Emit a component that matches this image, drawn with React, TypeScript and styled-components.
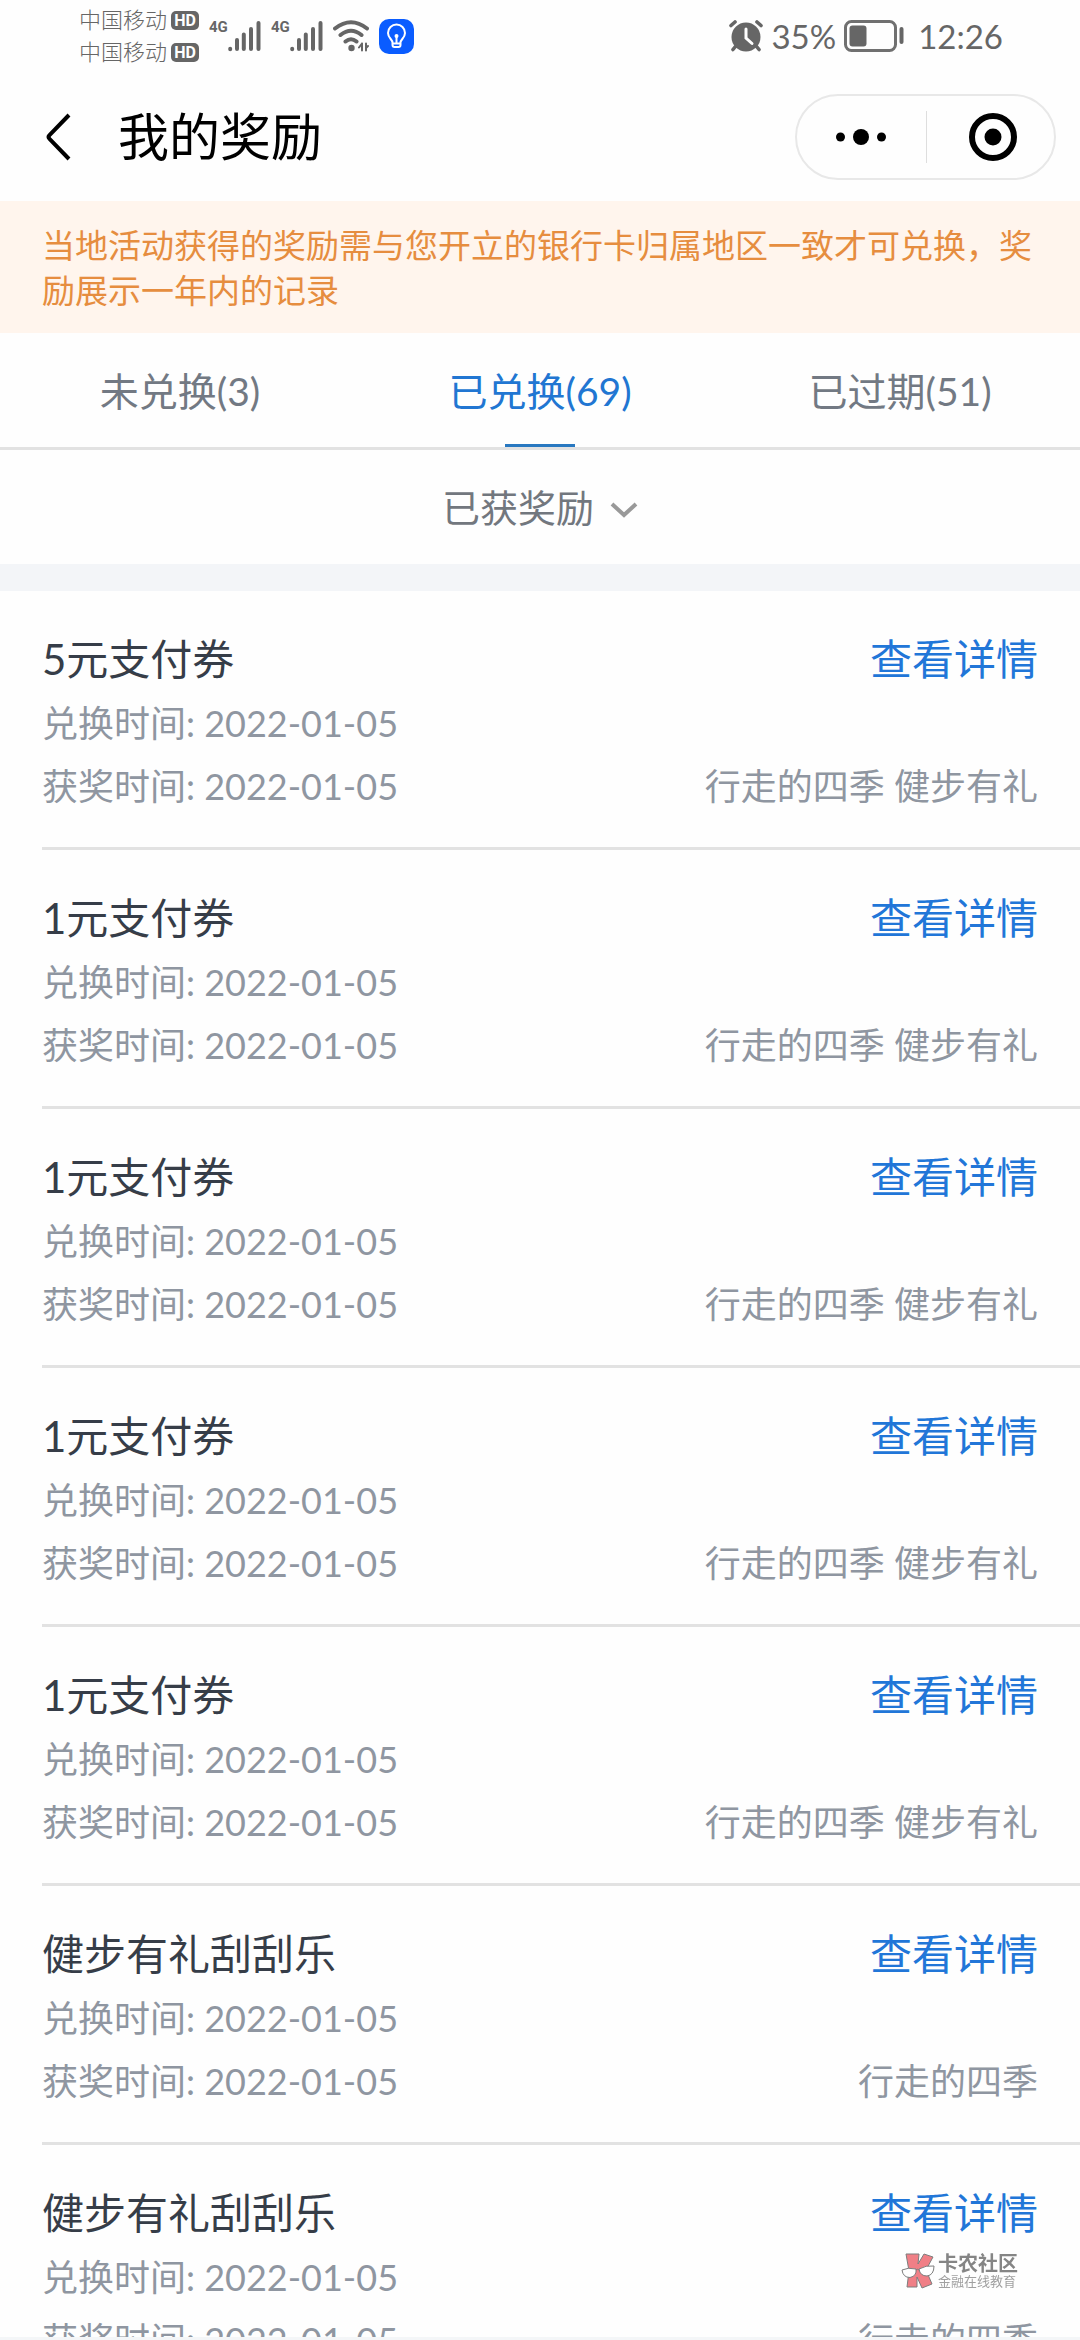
import React, { useState } from "react";
import styled, { createGlobalStyle } from "styled-components";

const GlobalStyle = createGlobalStyle`
  *, *::before, *::after { box-sizing: border-box; }
  body {
    margin: 0;
    background: #fefefe;
    font-family: Lato, "Noto Sans CJK SC", sans-serif;
  }
  button, select { font: inherit; color: inherit; background: none; border: 0; padding: 0; margin: 0; }
`;

const Screen = styled.div`
  height: 100vh;
  display: flex;
  flex-direction: column;
  border-bottom: 3px solid #f4f6f8;
`;

/* ---------- status bar ---------- */

const StatusBar = styled.div`
  flex: none;
  height: 74px;
  padding: 3px 77px 0 79px;
  display: flex;
  justify-content: space-between;
  color: #666;
`;

const StatusGroup = styled.div<{ $gap: number }>`
  height: 66px;
  display: flex;
  align-items: center;
  gap: ${(p) => p.$gap}px;
`;

const Carriers = styled.div`
  display: flex;
  flex-direction: column;
`;

const Carrier = styled.div`
  display: flex;
  align-items: center;
  gap: 4px;
  height: 32px;
  font-size: 22px;
  font-weight: 300;
  line-height: 32px;
`;

const HdBadge = styled.span`
  width: 28px;
  height: 19px;
  border-radius: 5px;
  background: #666;
  color: #fff;
  font: 700 16px/19px Roboto, sans-serif;
  text-align: center;
`;

const Signal = styled.div`
  display: flex;
  align-items: flex-start;
  height: 32px;
`;

const Network = styled.span`
  width: 19px;
  font: 700 15px/15px Roboto, sans-serif;
`;

const StatusText = styled.span`
  font-size: 33px;
  line-height: 40px;
`;

const Clock = styled(StatusText)`
  margin-left: 6px;
`;

/* ---------- title bar ---------- */

const TitleBar = styled.header`
  flex: none;
  height: 127px;
  padding: 0 24px 2px 34px;
  display: flex;
  align-items: center;
`;

const BackButton = styled.button`
  width: 48px;
  height: 60px;
  display: flex;
  align-items: center;
  justify-content: center;
`;

const Title = styled.h1`
  flex: 1;
  margin: 0 0 0 36px;
  font-size: 51px;
  font-weight: 400;
  line-height: 60px;
  color: #000;
`;

const Capsule = styled.div`
  width: 261px;
  height: 86px;
  border: 2px solid #e8e8e8;
  border-radius: 43px;
  display: grid;
  grid-template-columns: 1fr 1fr;
  align-items: center;
`;

const CapsuleButton = styled.button`
  height: 52px;
  display: flex;
  align-items: center;
  justify-content: center;

  & + & {
    padding-left: 6px;
    border-left: 1px solid #dedede;
  }
`;

/* ---------- notice, tabs, filter ---------- */

const Notice = styled.p`
  flex: none;
  margin: 0;
  padding: 22px 42px 20px;
  background: #fff5ed;
  color: #e68d3f;
  font-size: 33px;
  line-height: 45px;
`;

const Tabs = styled.nav`
  flex: none;
  display: grid;
  grid-template-columns: repeat(3, 1fr);
  border-bottom: 3px solid #e2e2e2;
`;

const Tab = styled.button<{ $active: boolean }>`
  position: relative;
  height: 114px;
  padding-bottom: 2px;
  font-size: 39px;
  color: ${(p) => (p.$active ? "#2176d2" : "#727983")};

  &::after {
    content: "";
    display: ${(p) => (p.$active ? "block" : "none")};
    position: absolute;
    left: calc(50% - 35px);
    bottom: 0;
    width: 70px;
    height: 3px;
    background: #2878c0;
  }
`;

const Filter = styled.label`
  flex: none;
  height: 114px;
  display: flex;
  align-items: center;
  justify-content: center;
  gap: 16px;
  color: #72777e;
`;

const FilterSelect = styled.select`
  appearance: none;
  field-sizing: content;
  outline: none;
  font-size: 38px;
  line-height: 60px;
`;

const Band = styled.div`
  flex: none;
  height: 27px;
  background: #f3f5f8;
`;

/* ---------- rewards ---------- */

const RewardList = styled.ul`
  flex: 1;
  min-height: 0;
  margin: 0;
  padding: 0 0 0 42px;
  list-style: none;
  overflow-y: auto;
  scrollbar-width: none;
`;

const Reward = styled.li`
  padding: 35px 42px 29px 0;
  border-bottom: 3px solid #e2e2e2;
`;

const Line = styled.div`
  display: flex;
  justify-content: space-between;
  font-size: 36px;
  line-height: 63px;
  color: #8f96a1;
`;

const NameLine = styled(Line)`
  font-size: 42px;
  line-height: 66px;
`;

const RewardName = styled.h2`
  margin: 0;
  font-size: inherit;
  font-weight: 400;
  color: #363d48;
`;

const DetailLink = styled.a`
  color: #2176d8;
  text-decoration: none;
`;

/* ---------- watermark ---------- */

const Watermark = styled.div`
  position: fixed;
  right: 62px;
  bottom: 51px;
  display: flex;
  align-items: center;
  gap: 3px;
  color: #858585;
`;

const WatermarkText = styled.div`
  display: flex;
  flex-direction: column;
`;

const WatermarkName = styled.strong`
  font-size: 20px;
  font-weight: 700;
  line-height: 21px;
`;

const WatermarkSub = styled.span`
  font-size: 13px;
  line-height: 15px;
  color: #a0a0a0;
`;

/* ---------- drawings ---------- */

const SignalBars = () => (
  <svg width="33" height="32" viewBox="0 0 33 32" stroke="#666" strokeWidth="4" strokeLinecap="round" aria-hidden>
    <path d="M2.2 28.8v.4M9 20v9M15.8 14.5V29M23 9v20M30.5 3v26" />
  </svg>
);

const WifiIcon = () => (
  <svg width="36" height="32" viewBox="0 0 36 32" fill="none" stroke="#666" strokeWidth="4" strokeLinecap="round" aria-hidden>
    <path d="M2 8.500Q18 -4 34 8.500M7.500 15Q18 6.500 28.500 15M12.500 21.500Q18 17 23.500 21.500" />
    <circle cx="18.500" cy="28" r="3.200" fill="#666" stroke="none" />
    <path d="M29 23.500v7M29 23.500l-3 4M33 30.500v-7M33 28l2-2" strokeWidth="2" />
  </svg>
);

const BulbIcon = () => (
  <svg width="35" height="35" viewBox="0 0 35 35" fill="none" stroke="#fff" strokeWidth="2" strokeLinecap="round" strokeLinejoin="round" aria-hidden>
    <rect width="35" height="35" rx="10" fill="#0a5cff" stroke="none" />
    <path d="M13.500 23.500c0-3-4.500-4.500-4.500-9.500a8.500 8.500 0 0 1 17 0c0 5-4.500 6.500-4.500 9.500v2.500q0 2-2 2h-4q-2 0-2-2z" />
    <path d="M17.500 18v6M14 24.500h7" />
    <circle cx="17.500" cy="17" r="2" fill="#fff" stroke="none" />
  </svg>
);

const AlarmIcon = () => (
  <svg width="34" height="32" viewBox="0 0 34 32" fill="none" stroke="#666" strokeLinecap="round" aria-hidden>
    <circle cx="17" cy="17" r="14.500" fill="#666" stroke="none" />
    <path d="M2 5.500l4-3.500M32 5.500L28 2M6 27l-2 2.500M28 27l2 2.500" strokeWidth="3.600" />
    <path d="M17 9v9l6 5.500" stroke="#fff" strokeWidth="3" />
  </svg>
);

const BatteryIcon = () => (
  <svg width="60" height="32" viewBox="0 0 60 32" aria-hidden>
    <rect x="1.500" y="1.500" width="50" height="29" rx="6" fill="none" stroke="#707070" strokeWidth="3" />
    <rect x="5.500" y="5.500" width="17" height="21" rx="3" fill="#666" />
    <rect x="55.500" y="7" width="4" height="17" rx="2" fill="#666" />
  </svg>
);

const BackIcon = () => (
  <svg width="26" height="48" viewBox="0 0 26 48" fill="none" stroke="#000" strokeWidth="4" strokeLinejoin="round" aria-hidden>
    <path d="M24 2L4.500 22.200q-1.800 1.800 0 3.600L24 46" />
  </svg>
);

const MoreIcon = () => (
  <svg width="52" height="20" viewBox="0 0 52 20" aria-hidden>
    <circle cx="5.500" cy="10" r="4.500" />
    <circle cx="26" cy="10" r="8" />
    <circle cx="46.500" cy="10" r="4.500" />
  </svg>
);

const TargetIcon = () => (
  <svg width="48" height="48" viewBox="0 0 48 48" aria-hidden>
    <circle cx="24" cy="24" r="21" fill="none" stroke="#000" strokeWidth="6" />
    <circle cx="24" cy="24" r="8.500" />
  </svg>
);

const ChevronIcon = () => (
  <svg width="28" height="24" viewBox="0 0 28 24" fill="none" stroke="#999" strokeWidth="4" aria-hidden>
    <path d="M2 9l12 11L26 9" />
  </svg>
);

const KLogo = () => (
  <svg width="34" height="36" viewBox="0 0 34 36" strokeWidth="1" strokeLinejoin="round" aria-hidden>
    <path d="M5 1h13l-1 10 6-10 9 3-7 13 6 14-10 4-5-11v10H6l2-16z" fill="#f07f86" stroke="#7d7d7d" />
    <path d="M1 17q6-3 14-1 1 7-6 8.500-7 0-8-7.500zM18 16q7-4 15-3 0 9-7 10-7 0-8-7z" fill="#fff" stroke="#7d7d7d" />
    <path d="M15 17q1.500-1.500 3 0" fill="none" stroke="#7d7d7d" />
  </svg>
);

/* ---------- data ---------- */

const tabs = [
  { label: "未兑换", count: 3 },
  { label: "已兑换", count: 69 },
  { label: "已过期", count: 51 },
];

const WALK = "行走的四季";
const WALK_FIT = "行走的四季 健步有礼";
const DATE = "2022-01-05";

const rewards = [
  { name: "5元支付券", source: WALK_FIT },
  { name: "1元支付券", source: WALK_FIT },
  { name: "1元支付券", source: WALK_FIT },
  { name: "1元支付券", source: WALK_FIT },
  { name: "1元支付券", source: WALK_FIT },
  { name: "健步有礼刮刮乐", source: WALK },
  { name: "健步有礼刮刮乐", source: WALK },
];

export default function App() {
  const [active, setActive] = useState(1);

  return (
    <Screen>
      <GlobalStyle />
      <StatusBar>
        <StatusGroup $gap={10}>
          <Carriers>
            {[0, 1].map((sim) => (
              <Carrier key={sim}>
                中国移动<HdBadge>HD</HdBadge>
              </Carrier>
            ))}
          </Carriers>
          {[0, 1].map((sim) => (
            <Signal key={sim}>
              <Network>4G</Network>
              <SignalBars />
            </Signal>
          ))}
          <WifiIcon />
          <BulbIcon />
        </StatusGroup>
        <StatusGroup $gap={8}>
          <AlarmIcon />
          <StatusText>35%</StatusText>
          <BatteryIcon />
          <Clock>12:26</Clock>
        </StatusGroup>
      </StatusBar>

      <TitleBar>
        <BackButton aria-label="返回">
          <BackIcon />
        </BackButton>
        <Title>我的奖励</Title>
        <Capsule>
          <CapsuleButton aria-label="更多">
            <MoreIcon />
          </CapsuleButton>
          <CapsuleButton aria-label="关闭">
            <TargetIcon />
          </CapsuleButton>
        </Capsule>
      </TitleBar>

      <Notice>当地活动获得的奖励需与您开立的银行卡归属地区一致才可兑换，奖励展示一年内的记录</Notice>

      <Tabs>
        {tabs.map((tab, i) => (
          <Tab key={tab.label} $active={i === active} onClick={() => setActive(i)}>
            {tab.label}({tab.count})
          </Tab>
        ))}
      </Tabs>

      <Filter>
        <FilterSelect aria-label="奖励类型">
          <option>已获奖励</option>
        </FilterSelect>
        <ChevronIcon />
      </Filter>
      <Band />

      <RewardList>
        {rewards.map((reward, i) => (
          <Reward key={i}>
            <NameLine>
              <RewardName>{reward.name}</RewardName>
              <DetailLink href="#detail">查看详情</DetailLink>
            </NameLine>
            <Line>兑换时间: {DATE}</Line>
            <Line>
              <span>获奖时间: {DATE}</span>
              <span>{reward.source}</span>
            </Line>
          </Reward>
        ))}
      </RewardList>

      <Watermark>
        <KLogo />
        <WatermarkText>
          <WatermarkName>卡农社区</WatermarkName>
          <WatermarkSub>金融在线教育</WatermarkSub>
        </WatermarkText>
      </Watermark>
    </Screen>
  );
}
